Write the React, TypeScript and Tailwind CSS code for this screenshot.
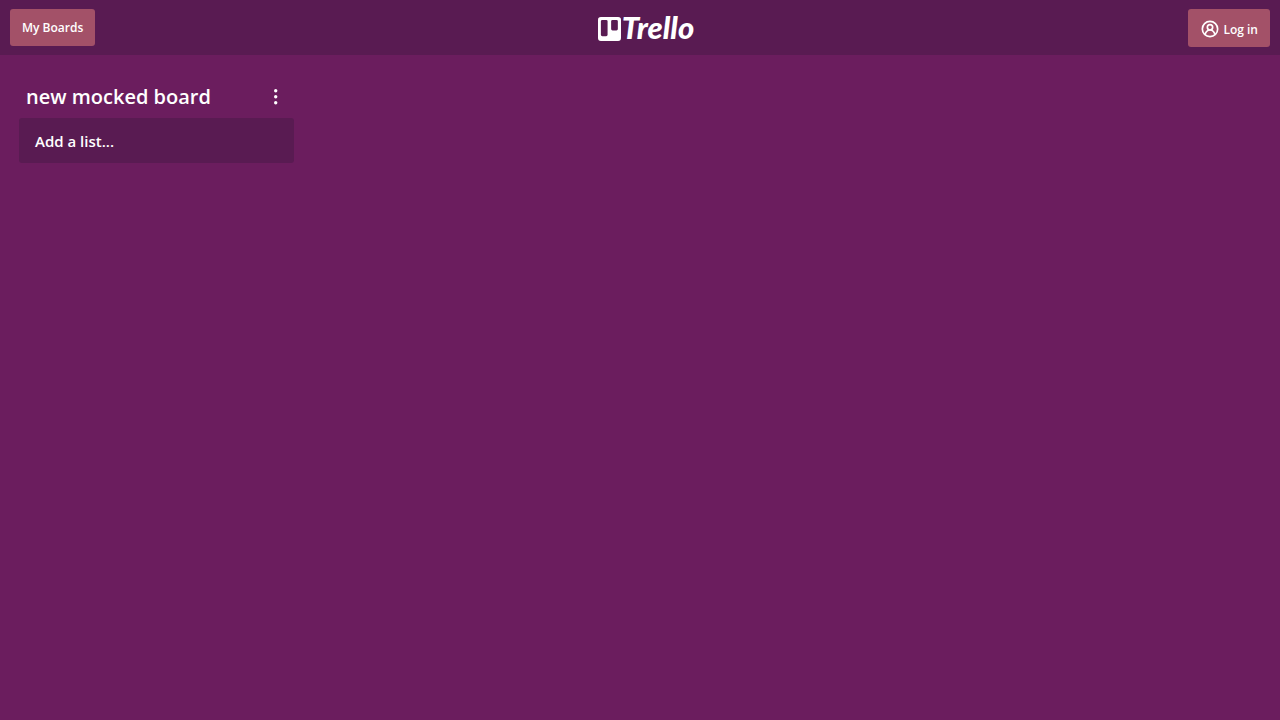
import { useState } from "react";

function AccountIcon() {
  return (
    <svg viewBox="0 0 24 24" className="size-5" fill="none" stroke="currentColor" strokeWidth="2" aria-hidden="true">
      <circle cx="12" cy="12" r="9.200" />
      <circle cx="12" cy="10" r="3.200" />
      <path d="M6 18.600C7.200 15 9.600 13.200 12 13.200s4.800 1.800 6 5.400" />
    </svg>
  );
}

function Logo() {
  return (
    <a href="#home" aria-label="Trello" className="flex items-center gap-px text-white">
      <svg viewBox="0 0 24 25" className="mt-1 h-6 w-[23px]" aria-hidden="true">
        <path
          fill="currentColor"
          fillRule="evenodd"
          d="M3 0h18a3 3 0 0 1 3 3v19a3 3 0 0 1-3 3H3a3 3 0 0 1-3-3V3a3 3 0 0 1 3-3ZM4.500 3a1.500 1.500 0 0 0-1.500 1.500v14a1.500 1.500 0 0 0 1.500 1.500h4a1.500 1.500 0 0 0 1.500-1.500v-14a1.500 1.500 0 0 0-1.500-1.500ZM15.200 3a1.500 1.500 0 0 0-1.500 1.500v8a1.500 1.500 0 0 0 1.500 1.500h4a1.500 1.500 0 0 0 1.500-1.500v-8a1.500 1.500 0 0 0-1.500-1.500Z"
        />
      </svg>
      <span className="font-['Lato',sans-serif] text-[31px] leading-8 font-black italic">Trello</span>
    </a>
  );
}

export default function App() {
  const [name, setName] = useState("new mocked board");

  return (
    <div className="min-h-screen bg-[#6b1d5e] font-['Open_Sans',sans-serif] text-white">
      <header className="grid h-[55px] grid-cols-[1fr_auto_1fr] items-start bg-[#591b52] px-[10px] pt-[9px]">
        <button className="h-[37px] justify-self-start rounded-[3px] bg-[#a35168] px-3 text-xs font-semibold">My Boards</button>
        <div className="pt-0.5 pl-3">
          <Logo />
        </div>
        <button className="flex h-[38px] items-center gap-[3px] justify-self-end rounded-[3px] bg-[#a35168] px-3 pt-0.5 text-xs font-semibold">
          <AccountIcon />
          <span className="pt-0.5">Log in</span>
        </button>
      </header>
      <main className="w-[313px] px-[19px] pt-6">
        <div className="flex h-[35px] items-center justify-between pr-2 pl-[7px]">
          <input
            aria-label="Board name"
            value={name}
            onChange={(e) => setName(e.target.value)}
            className="w-56 bg-transparent text-xl font-semibold outline-none"
          />
          <button aria-label="Board options" className="flex h-8 w-5 items-center justify-center">
            <svg viewBox="0 0 4 16" className="h-4 w-1" fill="currentColor" aria-hidden="true">
              <circle cx="1.700" cy="1.700" r="1.700" />
              <circle cx="1.700" cy="7.700" r="1.700" />
              <circle cx="1.700" cy="13.700" r="1.700" />
            </svg>
          </button>
        </div>
        <button className="mt-1 block h-[45px] w-full rounded-[3px] bg-[#591b52] px-4 pt-0.5 text-left text-[15px] font-semibold">
          Add a list...
        </button>
      </main>
    </div>
  );
}
